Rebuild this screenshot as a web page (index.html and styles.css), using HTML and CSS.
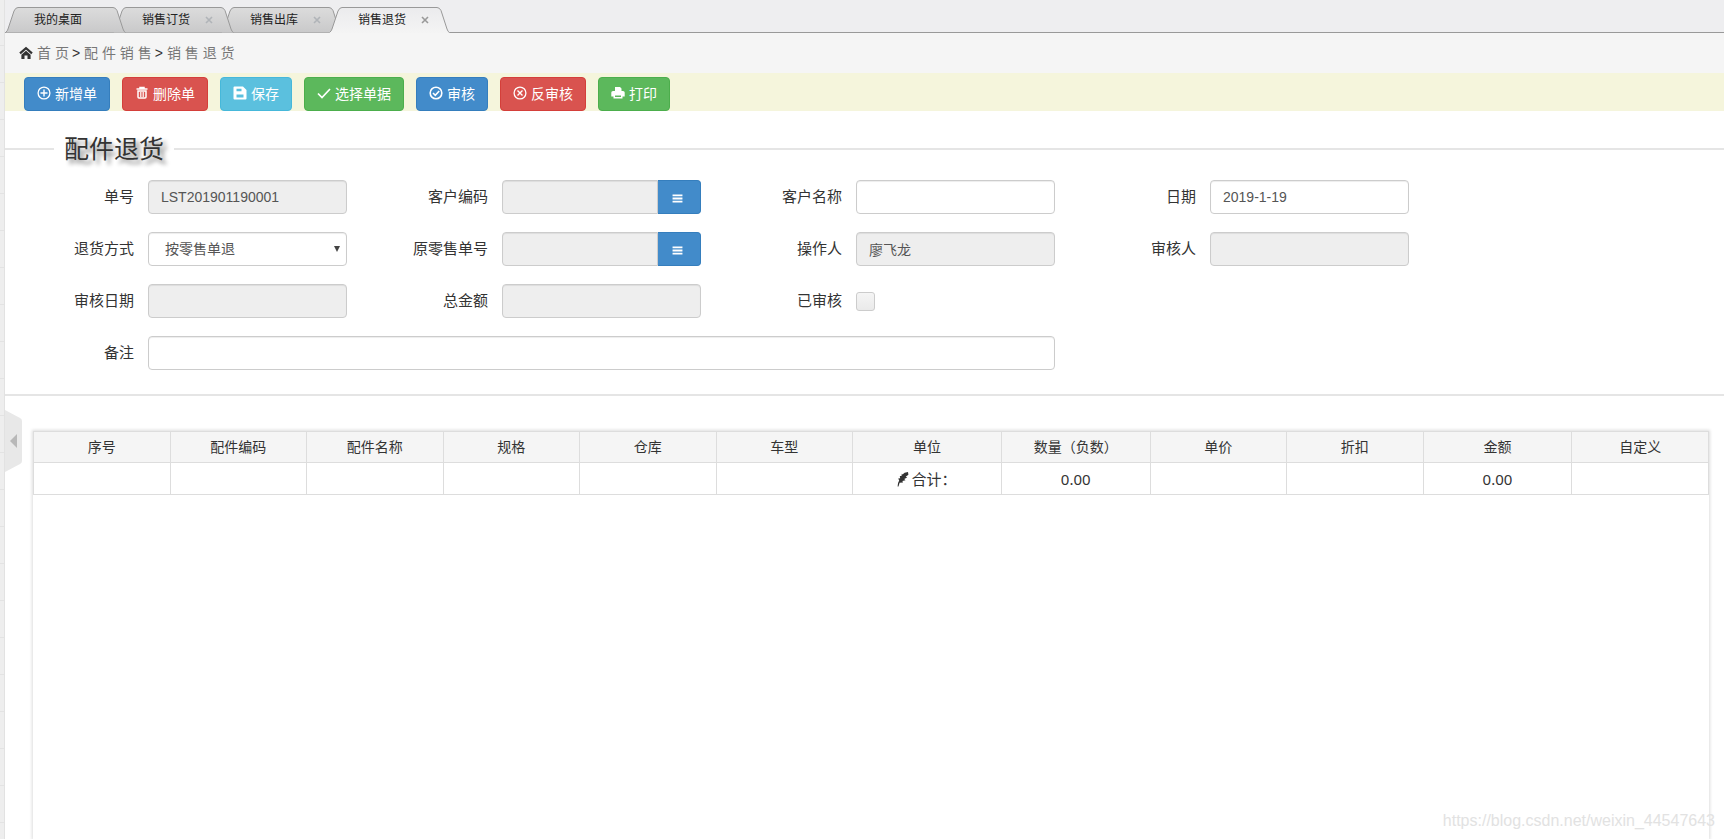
FILE: index.html
```html
<!DOCTYPE html>
<html lang="zh-CN">
<head>
<meta charset="utf-8">
<title>销售退货</title>
<link rel="stylesheet" href="styles.css">
</head>
<body>
<svg class="defs" aria-hidden="true">
  <defs>
    <linearGradient id="tab-fill" x1="0" y1="0" x2="0" y2="1"><stop offset="0" stop-color="#dcdcdc"/><stop offset="1" stop-color="#c9c9ca"/></linearGradient>
    <linearGradient id="tab-active" x1="0" y1="0" x2="0" y2="1"><stop offset="0" stop-color="#ebebed"/><stop offset="1" stop-color="#f4f4f4"/></linearGradient>
    <symbol id="i-x" viewBox="0 0 8 8"><path d="M1 1l6 6M7 1L1 7" stroke="currentColor" stroke-width="1.6"/></symbol>
    <symbol id="i-home" viewBox="0 0 14 14"><path d="M1 7.4L7 2.2l6 5.2" fill="none" stroke="currentColor" stroke-width="2.2"/><path d="M7 4.800l4.600 4V13H8.500V9.500h-3V13H2.400V8.800z" fill="currentColor"/></symbol>
    <symbol id="i-plus" viewBox="0 0 14 14"><circle cx="7" cy="7" r="5.900" fill="none" stroke="currentColor" stroke-width="1.300"/><path d="M7 3.500v7M3.500 7h7" stroke="currentColor" stroke-width="1.400"/></symbol>
    <symbol id="i-trash" viewBox="0 0 14 14"><path d="M1.500 3h11M5 2.500V1.500h4V2.500" fill="none" stroke="currentColor" stroke-width="1.500"/><path d="M3 5h8v6q0 1-1 1H4q-1 0-1-1z" fill="none" stroke="currentColor" stroke-width="1.500"/><path d="M5.500 6v5M7 6v5M8.500 6v5" stroke="currentColor" stroke-width=".8"/></symbol>
    <symbol id="i-save" viewBox="0 0 14 14"><path fill="currentColor" fill-rule="evenodd" d="M1.500.5H10L13.500 4v8.500q0 1-1 1h-11q-1 0-1-1v-11q0-1 1-1zM3.500 2.700v2.600h5V2.700zM3.500 8.500v3h7v-3z"/></symbol>
    <symbol id="i-tick" viewBox="0 0 14 14"><path d="M1 7.500l4 4L13 3" fill="none" stroke="currentColor" stroke-width="1.700"/></symbol>
    <symbol id="i-check" viewBox="0 0 14 14"><circle cx="7" cy="7" r="5.800" fill="none" stroke="currentColor" stroke-width="1.600"/><path d="M4 7l2.300 2.300L10.200 5" fill="none" stroke="currentColor" stroke-width="1.600"/></symbol>
    <symbol id="i-cross" viewBox="0 0 14 14"><circle cx="7" cy="7" r="5.900" fill="none" stroke="currentColor" stroke-width="1.300"/><path d="M4.500 4.500l5 5M9.500 4.500l-5 5" stroke="currentColor" stroke-width="1.400"/></symbol>
    <symbol id="i-print" viewBox="0 0 14 14"><path fill="currentColor" fill-rule="evenodd" d="M4 1h5l1.500 1.500V5H12q1.700 0 1.700 1.500V10.500H11.500V12.500h-9V10.500H.3V6.500Q.3 5 2 5h2zM4 9.500v1.500h6V9.500z"/></symbol>
    <symbol id="i-menu" viewBox="0 0 12 10"><path d="M.5 1.500h11M.5 5h11M.5 8.500h11" stroke="currentColor" stroke-width="2"/></symbol>
    <symbol id="i-feather" viewBox="0 0 12 16"><path fill="currentColor" d="M11 1Q7 1.200 5.500 3.400L4.800 2.800 4.500 5 2.800 5 3.200 7.200 1.200 7.500 2.200 9.500Q.7 11.500.6 15.500H1.500L2.600 11.800 6 11.500 5.400 10 8.500 9.300 7.200 8 10.200 6.400 8.700 5.700 11.400 3.800z"/></symbol>
  </defs>
</svg>

<div class="shell">
  <aside class="rail"></aside>
  <main class="page">
    <nav class="tabs">
      <div class="tab first"><svg class="tab-bg" viewBox="0 0 121 26"><path d="M.5 25.500Q2.500 24 3 22L9 4Q10.500.5 13 .5H108Q110.500.5 112 3.500L118 22Q119 25 120.500 25.500" fill="url(#tab-fill)" stroke="#999"/></svg><span>我的桌面</span></div>
      <div class="tab second"><svg class="tab-bg" viewBox="0 0 121 26"><path d="M.5 25.500Q2.500 24 3 22L9 4Q10.500.5 13 .5H108Q110.500.5 112 3.500L118 22Q119 25 120.500 25.500" fill="url(#tab-fill)" stroke="#999"/></svg><span>销售订货</span><button type="button" class="close" aria-label="关闭"><svg><use href="#i-x"/></svg></button></div>
      <div class="tab"><svg class="tab-bg" viewBox="0 0 121 26"><path d="M.5 25.500Q2.500 24 3 22L9 4Q10.500.5 13 .5H108Q110.500.5 112 3.500L118 22Q119 25 120.500 25.500" fill="url(#tab-fill)" stroke="#999"/></svg><span>销售出库</span><button type="button" class="close" aria-label="关闭"><svg><use href="#i-x"/></svg></button></div>
      <div class="tab active"><svg class="tab-bg" viewBox="0 0 121 26"><path d="M0 26Q2.500 24 3 22L9 4Q10.500.5 13 .5H108Q110.500.5 112 3.500L118 22Q119 25 121 26" fill="url(#tab-active)"/><path d="M.5 25.500Q2.500 24 3 22L9 4Q10.500.5 13 .5H108Q110.500.5 112 3.500L118 22Q119 25 120.500 25.500" fill="none" stroke="#999"/></svg><span>销售退货</span><button type="button" class="close" aria-label="关闭"><svg><use href="#i-x"/></svg></button></div>
    </nav>
    <div class="crumbs"><svg class="icon"><use href="#i-home"/></svg><a href="#">首 页</a><b>&gt;</b><a href="#">配 件 销 售</a><b>&gt;</b><a href="#">销 售 退 货</a></div>
    <div class="toolbar">
      <button type="button" class="btn blue"><svg class="icon"><use href="#i-plus"/></svg>新增单</button>
      <button type="button" class="btn red"><svg class="icon"><use href="#i-trash"/></svg>删除单</button>
      <button type="button" class="btn cyan"><svg class="icon"><use href="#i-save"/></svg>保存</button>
      <button type="button" class="btn green"><svg class="icon"><use href="#i-tick"/></svg>选择单据</button>
      <button type="button" class="btn blue"><svg class="icon"><use href="#i-check"/></svg>审核</button>
      <button type="button" class="btn red"><svg class="icon"><use href="#i-cross"/></svg>反审核</button>
      <button type="button" class="btn green"><svg class="icon"><use href="#i-print"/></svg>打印</button>
    </div>
    <section class="order">
      <h1 class="legend">配件退货</h1>
      <form class="grid">
        <label for="no">单号</label><input id="no" type="text" value="LST201901190001" readonly>
        <label for="cust">客户编码</label><div class="group"><input id="cust" type="text" readonly><button type="button" aria-label="选择客户"><svg><use href="#i-menu"/></svg></button></div>
        <label for="name">客户名称</label><input id="name" type="text">
        <label for="date">日期</label><input id="date" type="text" value="2019-1-19">
        <label for="mode">退货方式</label><div class="pick"><select id="mode"><option>按零售单退</option></select></div>
        <label for="src">原零售单号</label><div class="group"><input id="src" type="text" readonly><button type="button" aria-label="选择零售单"><svg><use href="#i-menu"/></svg></button></div>
        <label for="op">操作人</label><input id="op" type="text" value="廖飞龙" readonly>
        <label for="auditor">审核人</label><input id="auditor" type="text" readonly>
        <label for="adate">审核日期</label><input id="adate" type="text" readonly>
        <label for="total">总金额</label><input id="total" type="text" readonly>
        <label for="done">已审核</label><input id="done" type="checkbox">
        <label for="memo" class="row-start">备注</label><input id="memo" class="wide" type="text">
      </form>
    </section>
    <section class="sheet">
      <table>
        <colgroup><col class="s"><col class="s"><col class="s"><col class="s"><col class="s"><col class="s"><col class="m"><col class="m"><col class="s"><col class="s"><col class="m"><col class="s"></colgroup>
        <thead><tr><th>序号</th><th>配件编码</th><th>配件名称</th><th>规格</th><th>仓库</th><th>车型</th><th>单位</th><th>数量（负数）</th><th>单价</th><th>折扣</th><th>金额</th><th>自定义</th></tr></thead>
        <tbody><tr><td></td><td></td><td></td><td></td><td></td><td></td><td><span class="sum"><svg><use href="#i-feather"/></svg>合计：</span></td><td>0.00</td><td></td><td></td><td>0.00</td><td></td></tr></tbody>
      </table>
    </section>
    <button type="button" class="fold" aria-label="收起菜单"><svg viewBox="0 0 17 62"><path d="M0 0L15 8q2 1 2 3v40q0 2-2 3L0 62z" fill="#e8e8e8"/><path d="M12 24v14l-7-7z" fill="#b8b8b8"/></svg></button>
    <div class="mark">https://blog.csdn.net/weixin_44547643</div>
  </main>
</div>
</body>
</html>
```
FILE: styles.css
```css
* { box-sizing: border-box; }
body { margin: 0; background: #fff; color: #333; font-family: "Liberation Sans", "Noto Sans CJK SC", sans-serif; font-size: 14px; line-height: 20px; }
.defs { position: absolute; width: 0; height: 0; }
button { font-family: inherit; cursor: pointer; padding: 0; }
.shell { display: flex; min-height: 100vh; }
.rail { flex: none; width: 5px; border-right: 1px solid #e2e2e2; background: repeating-linear-gradient(#eee 0 36px, #e3e3e3 36px 37px) 0 9px; }
.page { flex: 1; min-width: 0; position: relative; display: flex; flex-direction: column; overflow: hidden; height: 100vh; }

.tabs { display: flex; flex: none; height: 33px; padding: 7px 0 0; background: #eeeef0; border-bottom: 1px solid #999; }
.tab { position: relative; width: 121px; height: 26px; margin-right: -13px; padding: 0 21px 0 29px; display: flex; align-items: center; justify-content: space-between; font-size: 12px; line-height: 26px; color: #222; }
.tab span, .tab .close { position: relative; }
.first { z-index: 3; }
.second { z-index: 2; }
.active { z-index: 4; }
.tab-bg { position: absolute; inset: 0; width: 121px; height: 26px; }
.close { display: flex; width: 8px; height: 8px; border: 0; background: none; color: #b0b4b8; }
.close svg { width: 8px; height: 8px; }
.active .close { color: #999; }

.crumbs { flex: none; display: flex; align-items: center; height: 40px; padding: 0 14px; background: #f5f5f5; }
.crumbs a { color: #777; text-decoration: none; }
.crumbs b { font-weight: 400; padding: 0 4px 0 3px; }
.icon { width: 14px; height: 14px; flex: none; margin-right: 4px; }

.toolbar { flex: none; display: flex; gap: 12px; padding: 4px 19px 0; background: #f5f5dc; }
.btn { height: 34px; padding: 0 12px 2px; border: 1px solid; border-radius: 4px; color: #fff; font-size: 14px; display: flex; align-items: center; }
.blue { background: #428bca; border-color: #357ebd; }
.red { background: #d9534f; border-color: #d43f3a; }
.cyan { background: #5bc0de; border-color: #46b8da; }
.green { background: #5cb85c; border-color: #4cae4c; }

.order { flex: none; padding: 20px 0 24px; border-bottom: 2px solid #e5e5e5; }
.legend { display: flex; align-items: center; margin: 0; font-weight: 400; font-size: 25px; line-height: 36px; gap: 10px; text-shadow: 4px 4px 4px #888; }
.legend::before, .legend::after { content: ""; height: 2px; background: #e5e5e5; }
.legend::before { width: 49px; }
.legend::after { flex: 1; }
.grid { display: grid; grid-template-columns: repeat(4, minmax(60px, 155fr) minmax(120px, 199fr)); margin: 13px 315px 0 -12px; row-gap: 18px; align-items: center; }
.grid label { text-align: right; font-size: 15px; line-height: 34px; padding-right: 14px; white-space: nowrap; }
.grid input[type="text"], .grid select { width: 100%; min-width: 0; height: 34px; border: 1px solid #ccc; border-radius: 4px; padding: 0 12px; background: #fff; color: #555; font-family: inherit; font-size: 14px; box-shadow: inset 0 1px 1px rgba(0, 0, 0, .075); }
.grid input[readonly] { background: #eee; }
.grid select { appearance: none; padding: 0 16px; display: block; }
.pick { position: relative; }
.pick::after { content: ""; position: absolute; right: 7px; top: 14px; border: 3px solid transparent; border-top: 6px solid #444; border-bottom: 0; pointer-events: none; }
.group { display: flex; }
.group input[type="text"] { border-radius: 4px 0 0 4px; }
.group button { flex: none; width: 43px; height: 34px; border: 1px solid #357ebd; border-left: 0; background: #428bca; color: #fff; border-radius: 0 4px 4px 0; }
.group svg { display: block; width: 11px; height: 9px; margin: 2px auto 0 14px; }
.grid input[type="checkbox"] { appearance: none; width: 19px; height: 19px; margin: 0; border: 1px solid #ccc; border-radius: 3px; background: linear-gradient(#f5f5f5, #eaeaea); }
.row-start { grid-column: 1; }
.grid .wide { grid-column: 2 / 7; }

.sheet { flex: 1; margin: 35px 15px 0 28px; box-shadow: 0 0 3px 1px #ddd; }
table { width: 100%; border-collapse: collapse; table-layout: fixed; text-align: center; }
.s { width: 8.15%; }
.m { width: 8.88%; }
th, td { height: 32px; padding: 0; border: 1px solid #ddd; font-weight: 400; }
th { background: #f5f5f5; height: 31px; }
td { font-family: "Noto Sans", "Noto Sans CJK SC", sans-serif; font-size: 15px; }
.sum { display: inline-flex; align-items: center; vertical-align: middle; }
.sum svg { width: 12px; height: 16px; margin-right: 2px; }

.fold { position: absolute; left: 0; top: 410px; width: 17px; height: 62px; border: 0; background: none; }
.fold svg { display: block; }
.mark { position: absolute; right: 9px; bottom: 8px; font-size: 16px; color: #e2e2e2; }
```
